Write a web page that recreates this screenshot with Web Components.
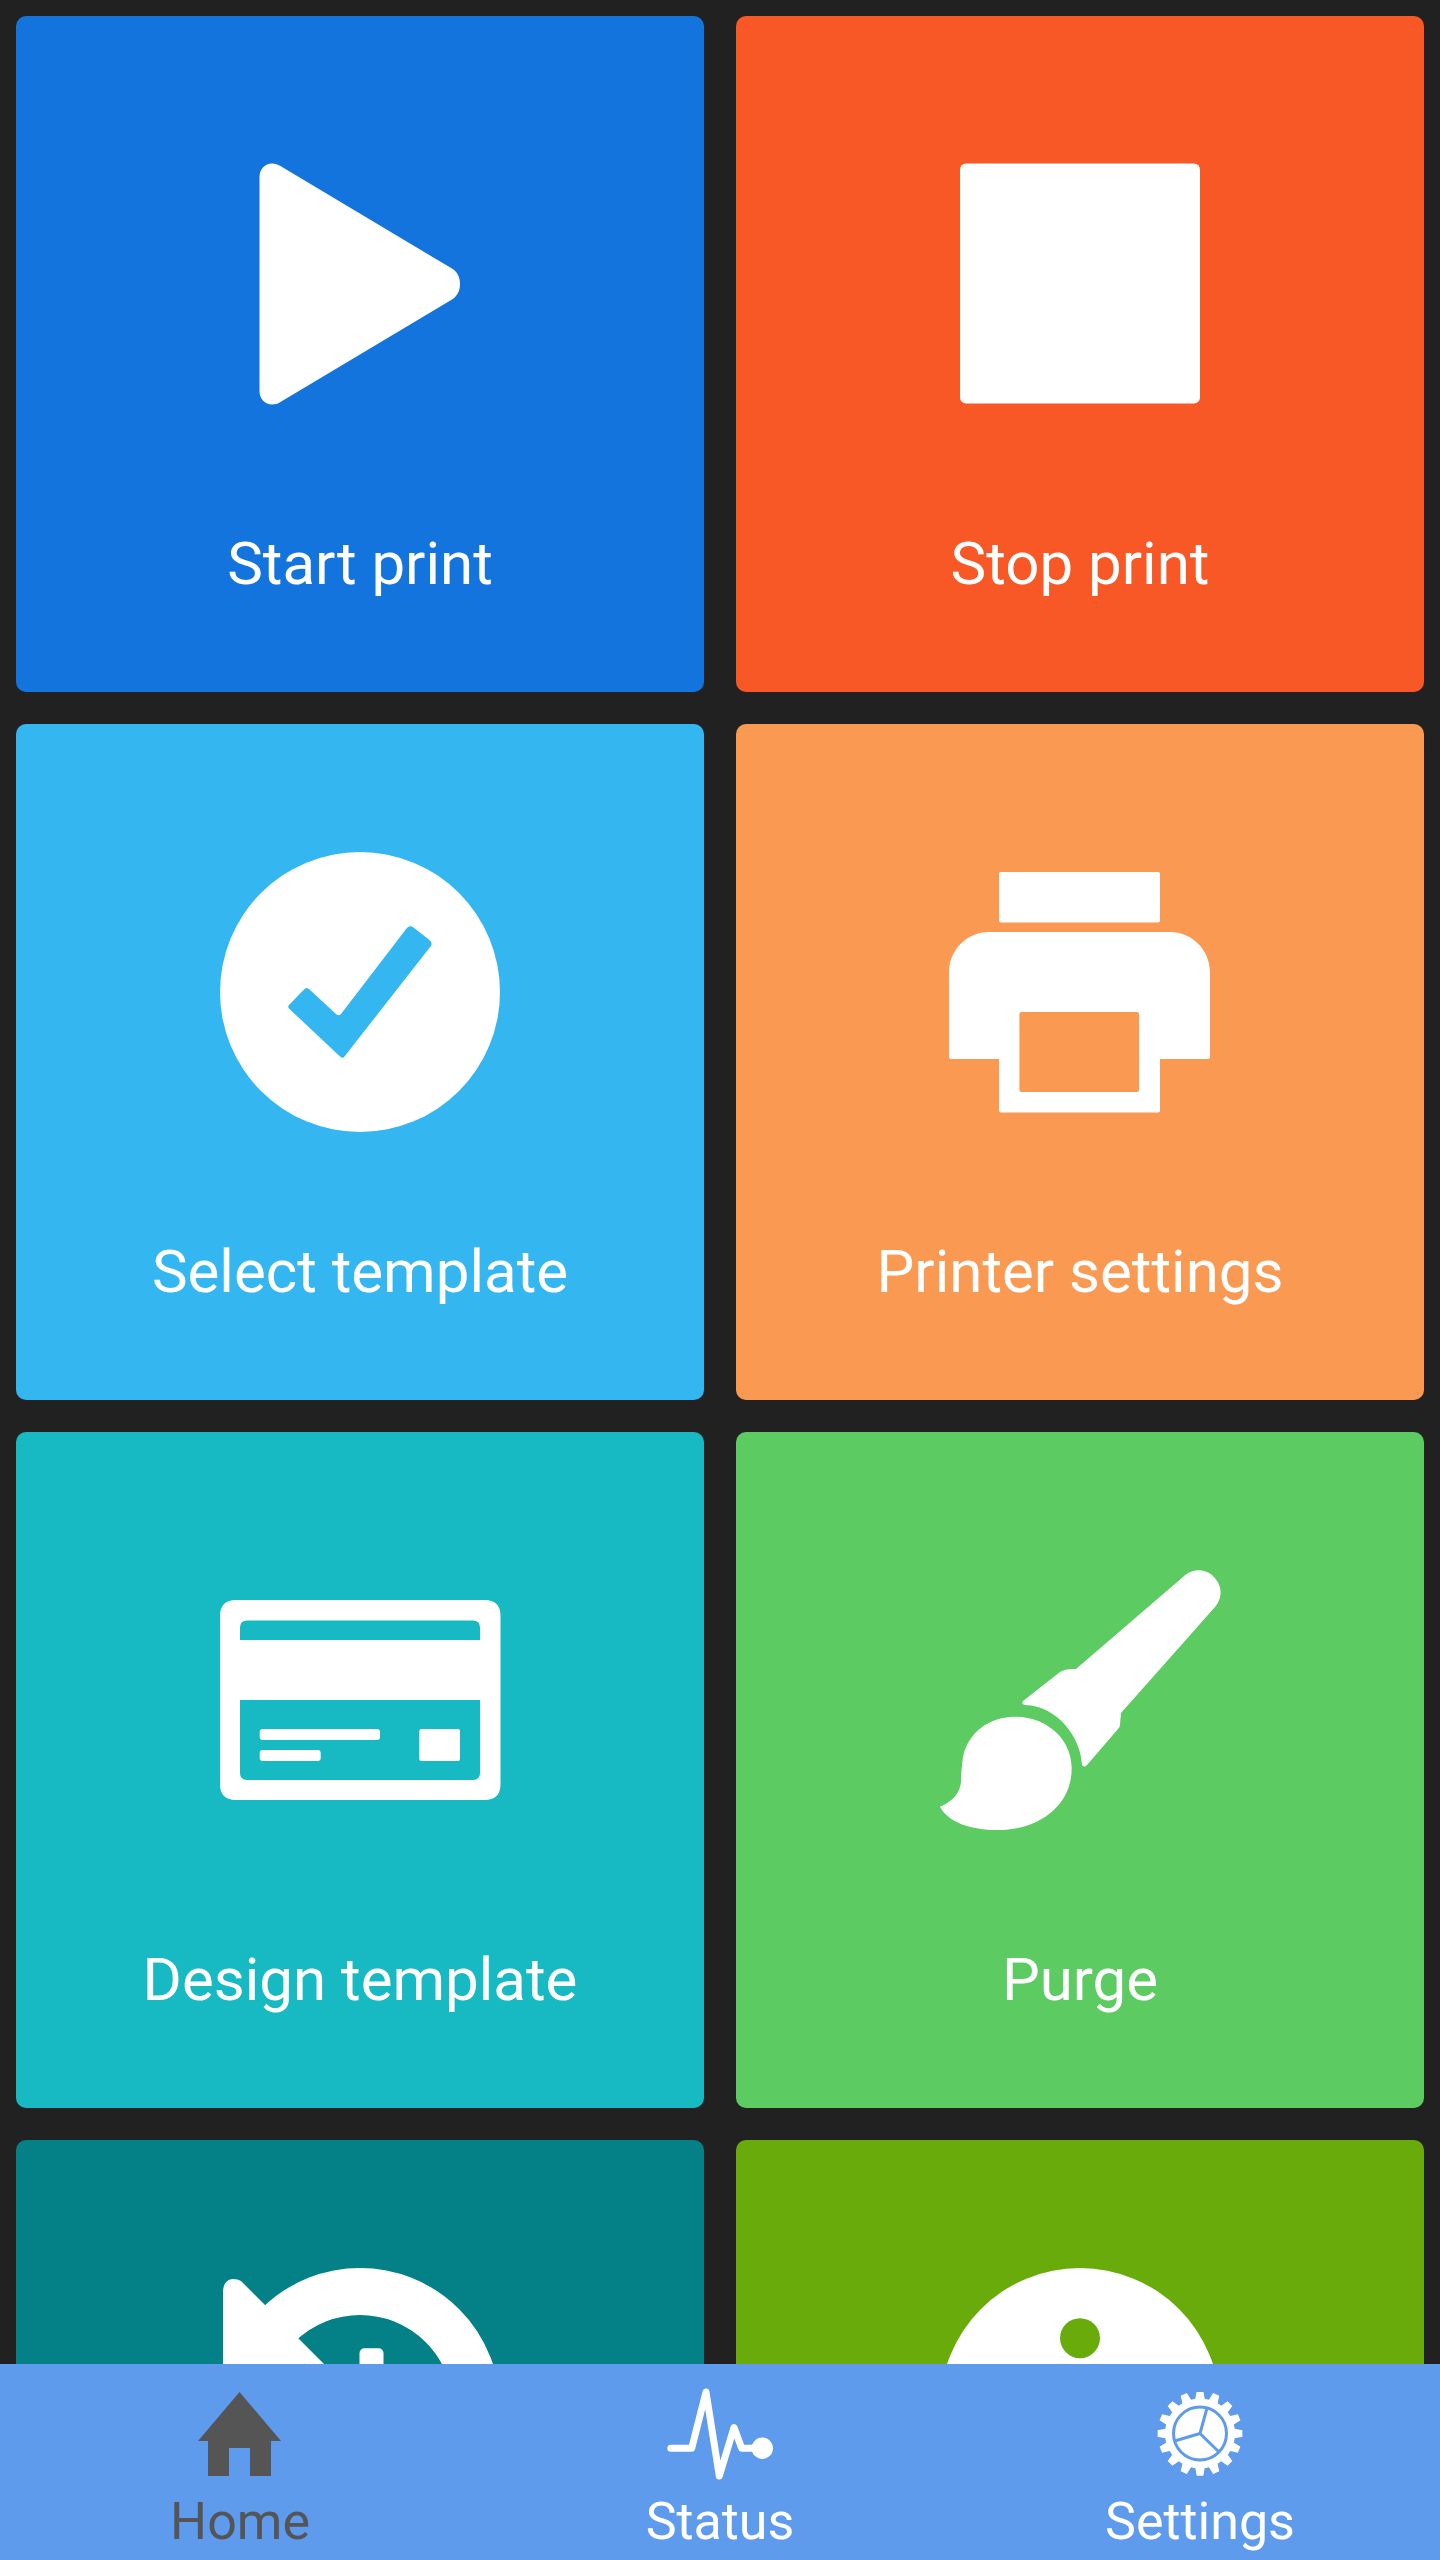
<!DOCTYPE html>
<html lang="en">
<head>
<meta charset="utf-8">
<title>Printer home</title>
<style>
  html, body { margin: 0; padding: 0; background: #212121; }
  body { font-family: Roboto, "Liberation Sans", sans-serif; }
  svg { display: block; overflow: visible; }
</style>
</head>
<body>
<template id="app-shell-tpl">
  <style>
    :host { display: flex; flex-direction: column; width: 1440px; height: 2560px; overflow: hidden; background: #212121; }
    .content { flex: 1; min-height: 0; overflow: hidden; }
    .grid { display: grid; grid-template-columns: 688px 688px; grid-auto-rows: 676px; gap: 32px; padding: 16px; }
  </style>
  <div class="content"><div class="grid"><slot></slot></div></div>
  <slot name="nav"></slot>
</template>

<template id="tile-button-tpl">
  <style>
    :host { display: flex; flex-direction: column; align-items: center; padding-top: 128px; box-sizing: border-box; border-radius: 10px; background: var(--tile); color: #fff; overflow: hidden; }
    .icon { width: 280px; height: 280px; flex: none; }
    .label { margin-top: 105px; font-size: 60px; line-height: 70px; white-space: nowrap; }
  </style>
  <div class="icon"><slot name="icon"></slot></div>
  <div class="label"><slot></slot></div>
</template>

<template id="bottom-nav-tpl">
  <style>
    :host { display: grid; grid-template-columns: repeat(3, 1fr); flex: none; height: 196px; background: #5f9bec; }
  </style>
  <slot></slot>
</template>

<template id="nav-item-tpl">
  <style>
    :host { display: flex; flex-direction: column; align-items: center; padding-top: 28px; box-sizing: border-box; color: #fff; }
    :host([active]) { color: #555; }
    .icon { width: 120px; height: 84px; flex: none; }
    .label { margin-top: 16px; font-size: 52px; line-height: 60px; white-space: nowrap; }
  </style>
  <div class="icon"><slot name="icon"></slot></div>
  <div class="label"><slot></slot></div>
</template>

<template id="gear-icon-tpl">
  <style>
    :host { display: block; width: 120px; height: 84px; }
  </style>
  <svg width="120" height="84" viewBox="0 0 120 84">
    <path class="teeth" fill="#fff"></path>
    <g transform="translate(60 41.5)" fill="none" stroke="#5f9bec" stroke-width="3">
      <circle r="26.5"></circle>
      <path d="M0 0L7 -25.5M0 0L18.5 18M0 0L-25.5 7.5"></path>
    </g>
  </svg>
</template>

<app-shell>
  <tile-button style="--tile:#1474dd">
    <svg slot="icon" width="280" height="280" viewBox="0 0 280 280">
      <path fill="#fff" d="M39.500 33C39.500 25 45 19.500 52 19.500C55 19.500 58 20.500 60 21.800L232 124.600C237 127.500 240 133 240 140C240 147 237 152.500 232 155.400L60 258.200C58 259.500 55 260.500 52 260.500C45 260.500 39.500 255 39.500 247Z"/>
    </svg>
    Start print
  </tile-button>
  <tile-button style="--tile:#f75825">
    <svg slot="icon" width="280" height="280" viewBox="0 0 280 280">
      <rect x="20" y="19.500" width="240" height="240" rx="6" fill="#fff"/>
    </svg>
    Stop print
  </tile-button>
  <tile-button style="--tile:#34b6f1">
    <svg slot="icon" width="280" height="280" viewBox="0 0 280 280">
      <circle cx="140" cy="140" r="140" fill="#fff"/>
      <path fill="#34b6f1" d="M186.500 76.500Q189.500 72.500 193.500 75.500L209.500 88Q213 91 210.500 94.500L124.500 204.500Q122.500 207 120 204.500L69.500 157Q67 154.700 69.500 152.500L84 137.500Q86.500 134.500 89.500 137.500L116 162Q119 164.500 121 162Z"/>
    </svg>
    Select template
  </tile-button>
  <tile-button style="--tile:#f99952">
    <svg slot="icon" width="280" height="280" viewBox="0 0 280 280">
      <rect x="59" y="20" width="161" height="50.500" rx="2" fill="#fff"/>
      <path fill-rule="evenodd" fill="#fff" d="M49 80H230C252 80 270 98 270 120V205Q270 207 268 207H220V258.500Q220 260.500 218 260.500H61Q59 260.500 59 258.500V207H11Q9 207 9 205V120C9 98 27 80 49 80ZM81 160Q79.400 160 79.400 162V238Q79.400 240 81 240H197Q199 240 199 238V162Q199 160 197 160Z"/>
    </svg>
    Printer settings
  </tile-button>
  <tile-button style="--tile:#17b9c2">
    <svg slot="icon" width="280" height="280" viewBox="0 0 280 280">
      <path fill-rule="evenodd" fill="#fff" d="M16 40H264.500Q280.500 40 280.500 56V224Q280.500 240 264.500 240H16Q0 240 0 224V56Q0 40 16 40ZM27 60.500Q20 60.500 20 67.500V80H260V67.500Q260 60.500 253 60.500ZM20 140V213Q20 220 27 220H253Q260 220 260 213V140Z"/>
      <rect x="39.700" y="169" width="120.300" height="11" rx="3" fill="#fff"/>
      <rect x="39.700" y="190" width="61" height="11" rx="3" fill="#fff"/>
      <rect x="199.300" y="169" width="40.700" height="32" rx="2" fill="#fff"/>
    </svg>
    Design template
  </tile-button>
  <tile-button style="--tile:#5ccb61">
    <svg slot="icon" width="280" height="280" viewBox="0 0 280 280">
      <path fill="#fff" d="M83 141L120 112Q125 109 131 109H136L243 17C250 10 262 7 272 15C283 25 283 38 275 47L181 153L180 165Q180 167 178 169L147 205Q144 208 142 205C141 178 118 146 85 145Q81 144 83 141Z"/>
      <path fill="#fff" d="M0 246.700C14 241 20 232 21 222C21 212 22 205 23 197C28 172 50 156.700 75 156.700C108 156.700 131.700 180 131.700 208.300C131.700 245 100 270 58 270C30 270 8 262 0 246.700Z"/>
    </svg>
    Purge
  </tile-button>
  <tile-button style="--tile:#048087">
    <svg slot="icon" width="280" height="280" viewBox="0 0 280 280">
      <circle cx="140" cy="140" r="116.500" fill="none" stroke="#fff" stroke-width="47"/>
      <path fill="#fff" d="M3 24C3 15 8 11 13 11Q18 11 21 13L130 122H3Z"/>
      <rect x="139.500" y="80.300" width="24" height="80" rx="5" fill="#fff"/>
    </svg>
  </tile-button>
  <tile-button style="--tile:#6aab0c">
    <svg slot="icon" width="280" height="280" viewBox="0 0 280 280">
      <circle cx="140" cy="140" r="140" fill="#fff"/>
      <circle cx="140" cy="70.200" r="20" fill="#6aab0c"/>
      <rect x="122" y="110" width="36" height="120" rx="6" fill="#6aab0c"/>
    </svg>
  </tile-button>

  <bottom-nav slot="nav">
    <nav-item active>
      <svg slot="icon" width="120" height="84" viewBox="0 0 120 84">
        <path fill="currentColor" d="M59.500 0L101 49H91V84H70V56H49V84H28V49H18Z"/>
      </svg>
      Home
    </nav-item>
    <nav-item>
      <svg slot="icon" width="120" height="84" viewBox="0 0 120 84">
        <path fill="none" stroke="currentColor" stroke-width="7" stroke-linecap="round" stroke-linejoin="round" d="M10.800 56.300H31.700L46 0L59.300 84L74 35.500L81.700 56.300H102"/>
        <circle cx="102.300" cy="56.300" r="10.700" fill="currentColor"/>
      </svg>
      Status
    </nav-item>
    <nav-item>
      <gear-icon slot="icon"></gear-icon>
      Settings
    </nav-item>
  </bottom-nav>
</app-shell>

<script>
  function stamp(host, id) {
    const root = host.attachShadow({ mode: 'open' });
    root.appendChild(document.getElementById(id).content.cloneNode(true));
    return root;
  }

  class AppShell extends HTMLElement {
    constructor() { super(); stamp(this, 'app-shell-tpl'); }
  }

  class TileButton extends HTMLElement {
    constructor() { super(); stamp(this, 'tile-button-tpl'); }
  }

  class BottomNav extends HTMLElement {
    constructor() { super(); stamp(this, 'bottom-nav-tpl'); }
  }

  class NavItem extends HTMLElement {
    constructor() { super(); stamp(this, 'nav-item-tpl'); }
  }

  class GearIcon extends HTMLElement {
    constructor() {
      super();
      const root = stamp(this, 'gear-icon-tpl');
      root.querySelector('.teeth').setAttribute('d', this.teethPath(60, 41.5, 16, 35, 42.5));
    }

    // 16 flat teeth around the hub
    teethPath(cx, cy, count, inner, outer) {
      const step = Math.PI * 2 / count;
      const pt = (r, a) => (cx + r * Math.sin(a)).toFixed(2) + ' ' + (cy - r * Math.cos(a)).toFixed(2);
      let d = '';
      for (let i = 0; i < count; i++) {
        const a = i * step;
        d += (i ? 'L' : 'M') + pt(inner, a - step * 0.34);
        d += 'L' + pt(outer, a - step * 0.2);
        d += 'L' + pt(outer, a + step * 0.2);
        d += 'L' + pt(inner, a + step * 0.34);
      }
      return d + 'Z';
    }
  }

  customElements.define('app-shell', AppShell);
  customElements.define('tile-button', TileButton);
  customElements.define('bottom-nav', BottomNav);
  customElements.define('nav-item', NavItem);
  customElements.define('gear-icon', GearIcon);
</script>
</body>
</html>
